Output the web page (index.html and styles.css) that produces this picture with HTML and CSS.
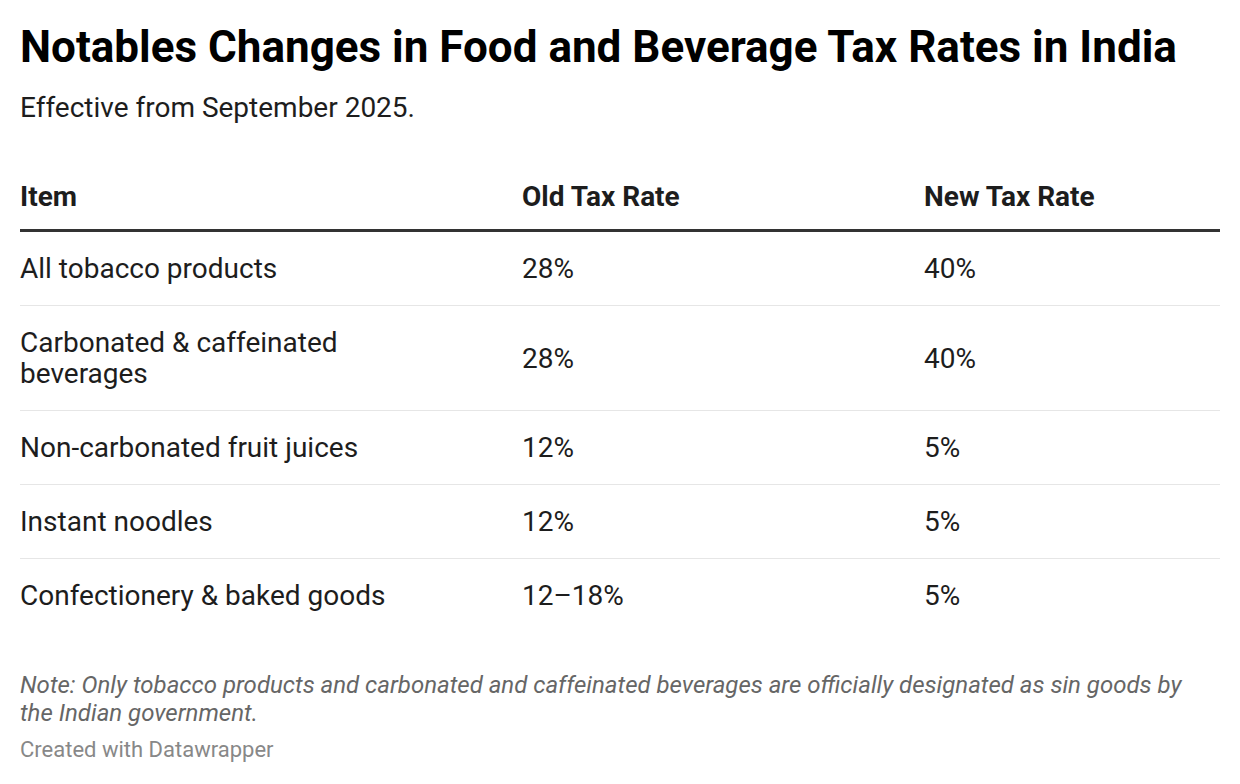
FILE: index.html
```html
<!DOCTYPE html>
<html lang="en">
<head>
<meta charset="utf-8">
<title>Notables Changes in Food and Beverage Tax Rates in India</title>
<link rel="stylesheet" href="styles.css">
</head>
<body>
<div class="chart">
  <h1 class="title">Notables Changes in Food and Beverage Tax Rates in India</h1>
  <p class="subtitle">Effective from September 2025.</p>
  <table class="table">
    <colgroup>
      <col class="c1"><col class="c2"><col class="c3">
    </colgroup>
    <thead>
      <tr><th>Item</th><th>Old Tax Rate</th><th>New Tax Rate</th></tr>
    </thead>
    <tbody>
      <tr><td>All tobacco products</td><td>28%</td><td>40%</td></tr>
      <tr><td class="wrap">Carbonated &amp; caffeinated beverages</td><td>28%</td><td>40%</td></tr>
      <tr><td>Non-carbonated fruit juices</td><td>12%</td><td>5%</td></tr>
      <tr><td>Instant noodles</td><td>12%</td><td>5%</td></tr>
      <tr><td>Confectionery &amp; baked goods</td><td>12–18%</td><td>5%</td></tr>
    </tbody>
  </table>
  <p class="note">Note: Only tobacco products and carbonated and caffeinated beverages are officially designated as sin goods by the Indian government.</p>
  <p class="credit">Created with Datawrapper</p>
</div>
</body>
</html>
```
FILE: styles.css
```css
html, body {
  margin: 0;
  padding: 0;
  background: #ffffff;
}
body {
  font-family: Roboto, "Liberation Sans", Arial, sans-serif;
  color: #1d1d1d;
}
.chart {
  padding: 21px 20px 0 20px;
}
.title {
  margin: 0;
  font-size: 44px;
  font-weight: 700;
  line-height: 52px;
  color: #000;
}
.subtitle {
  margin: 18px 0 0 0;
  font-size: 28px;
  line-height: 34px;
  color: #1d1d1d;
}
.table {
  margin-top: 55px;
  width: 1200px;
  border-collapse: collapse;
  table-layout: fixed;
}
.c1 { width: 502px; }
.c2 { width: 402px; }
.c3 { width: 296px; }
.table th {
  text-align: left;
  font-weight: 700;
  font-size: 28px;
  line-height: 34px;
  padding: 0 0 15px 0;
  border-bottom: 3px solid #333333;
  color: #1d1d1d;
}
.table td {
  font-size: 28px;
  line-height: 31px;
  padding: 21px 0 21px 0;
  border-bottom: 1px solid #e6e6e6;
  vertical-align: middle;
}
.table td.wrap {
  padding-right: 122px;
}
.table tbody tr:last-child td {
  border-bottom: none;
}
.note {
  margin: 39px 0 0 0;
  font-size: 24px;
  line-height: 28px;
  font-style: italic;
  color: #666666;
  padding-right: 30px;
}
.credit {
  margin: 10px 0 0 0;
  font-size: 22px;
  line-height: 26px;
  color: #888888;
}
```
